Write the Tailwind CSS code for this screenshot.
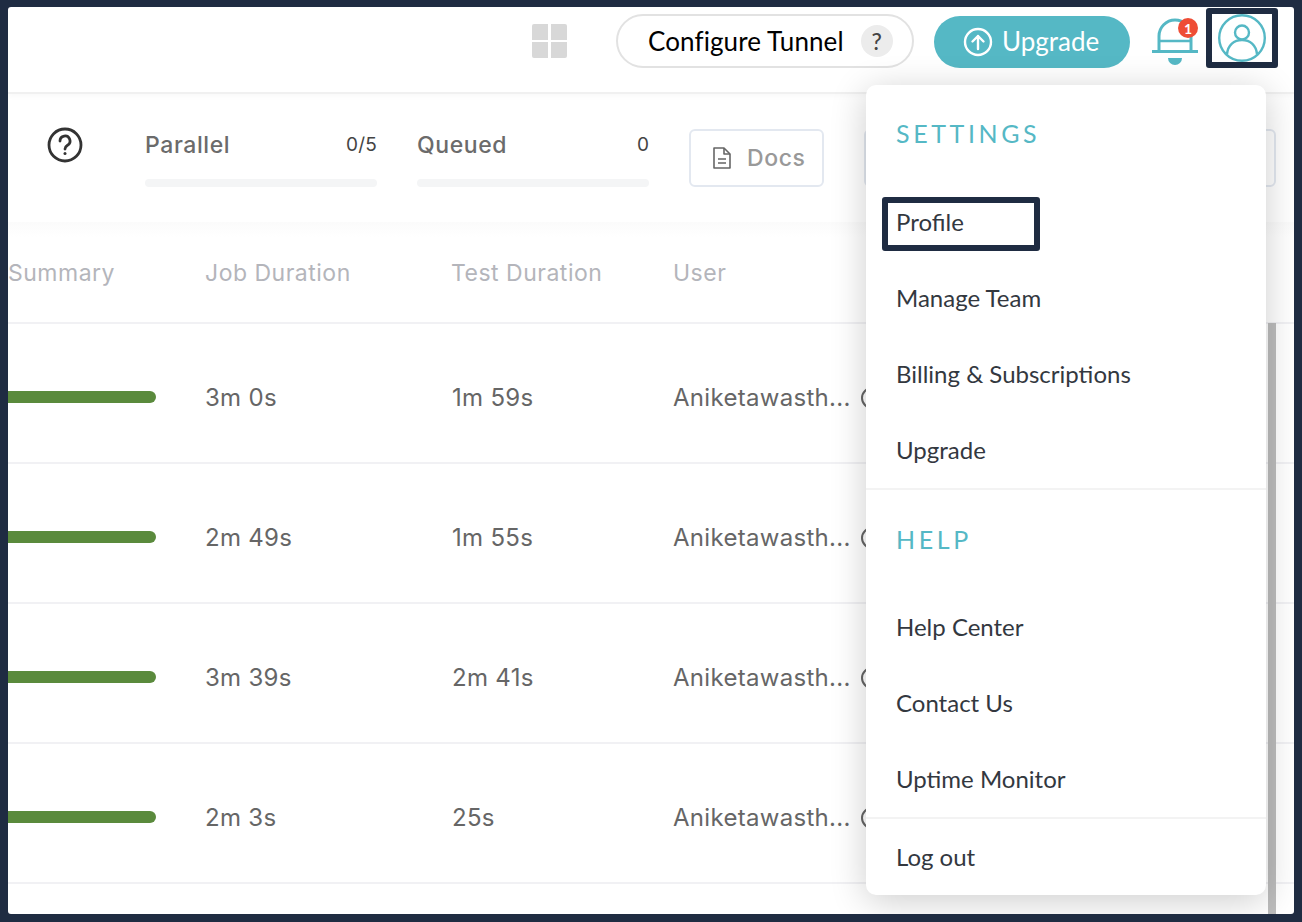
<!DOCTYPE html>
<html lang="en">
  <head>
    <meta charset="UTF-8" />
    <title>Profile menu</title>
    <script src="https://cdn.jsdelivr.net/npm/@tailwindcss/browser@4"></script>
  </head>
  <body class="bg-[#1f2c42] w-[1302px] h-[922px] overflow-hidden pt-[7px] pl-[8px] pr-[8px] pb-[8px] font-['Lato',sans-serif]">
    <div class="relative bg-white w-[1286px] h-[907px] overflow-hidden rounded-[3px]">
      <!-- top bar -->
      <header class="h-[87px] border-b-2 border-[#f0f0f0] shadow-[0_2px_6px_rgba(0,0,0,0.03)] flex items-start">
        <svg class="ml-[524px] mt-[17px] w-[35px] h-[34px]" viewBox="0 0 35 34" fill="#d8d8d8">
          <path d="M2 0h14v16H0V2a2 2 0 0 1 2-2zM19 0h14a2 2 0 0 1 2 2v14H19zM0 18h16v16H2a2 2 0 0 1-2-2zM19 18h16v14a2 2 0 0 1-2 2H19z" />
        </svg>
        <div class="ml-[49px] mt-[7px] w-[298px] h-[54px] rounded-full border-2 border-[#e2e2e2] flex items-center pl-[30px] text-[26px] tracking-[0.1px] text-black">
          <span>Configure Tunnel</span>
          <span class="ml-[17px] w-[32px] h-[32px] rounded-full bg-[#ececec] text-[#444] text-[23px] font-medium flex items-center justify-center">?</span>
        </div>
        <div class="ml-[20px] mt-[9px] w-[196px] h-[52px] rounded-full bg-[#55b8c5] text-white text-[26px] flex items-center pl-[29px]">
          <svg class="w-[30px] h-[30px] mr-[9px]" viewBox="0 0 30 30" fill="none" stroke="white" stroke-width="2.4" stroke-linecap="round" stroke-linejoin="round">
            <circle cx="15" cy="15" r="13" />
            <path d="M15 22V9M9.5 14.5 15 9l5.500 5.500" />
          </svg>
          <span class="-mt-[2px]">Upgrade</span>
        </div>
        <div class="relative ml-[22px] mt-[10px] w-[46px] h-[50px]">
          <svg class="w-[46px] h-[50px]" viewBox="0 0 46 50" fill="none" stroke="#55b8c5" stroke-width="3">
            <path d="M7 34V19a16 16 0 0 1 32 0v15" />
            <path d="M7 24h32" stroke-width="2.500" />
            <path d="M0 34.500h46" />
            <path d="M16 41h14a7 7 0 0 1-14 0z" fill="#55b8c5" stroke="none" />
          </svg>
          <span class="absolute left-[26px] top-[1px] w-[20px] h-[20px] rounded-full bg-[#ee4d36] text-white text-[14px] font-bold flex items-center justify-center">1</span>
        </div>
        <div class="ml-[8px] mt-[1px] w-[72px] h-[60px] border-[6px] border-[#1f2c42] rounded-[3px] flex items-start justify-center overflow-hidden">
          <svg class="w-[48px] h-[48px]" viewBox="0 0 48 48" fill="none" stroke="#55b8c5" stroke-width="2.400">
            <circle cx="24" cy="24" r="22.800" />
            <circle cx="24" cy="18.500" r="7" />
            <path d="M9 40c1-9 7-14 15-14s14 5 15 14" />
          </svg>
        </div>
      </header>

      <!-- stats strip -->
      <section class="h-[128px] flex items-start font-['Inter',sans-serif] text-[#6b6b6b]">
        <svg class="ml-[38px] mt-[32px] w-[38px] h-[38px]" viewBox="0 0 38 38" fill="none" stroke="#333" stroke-width="2.800">
          <circle cx="19" cy="19" r="16" />
          <path d="M14 15a5 5 0 1 1 7.500 4.300c-1.500.9-2.500 1.700-2.500 3.700" stroke-linecap="round" />
          <circle cx="19" cy="27.500" r="1.500" fill="#333" stroke="none" />
        </svg>
        <div class="ml-[61px] mt-[34px] w-[232px]">
          <div class="flex justify-between items-center h-[34px]">
            <span class="text-[23px] font-medium tracking-[0.6px]">Parallel</span>
            <span class="text-[19px] text-[#444] tracking-[0.2px]">0/5</span>
          </div>
          <div class="mt-[17px] h-[8px] rounded-full bg-[#f4f5f6]"></div>
        </div>
        <div class="ml-[40px] mt-[34px] w-[232px]">
          <div class="flex justify-between items-center h-[34px]">
            <span class="text-[23px] font-medium tracking-[0.6px]">Queued</span>
            <span class="text-[19px] text-[#444]">0</span>
          </div>
          <div class="mt-[17px] h-[8px] rounded-full bg-[#f4f5f6]"></div>
        </div>
        <div class="ml-[40px] mt-[35px] w-[135px] h-[58px] rounded-[6px] border-2 border-[#e3e8f0] flex items-center pl-[21px] text-[#999]">
          <svg class="w-[20px] h-[24px] mr-[15px]" viewBox="0 0 20 24" fill="none" stroke="#666" stroke-width="1.600" stroke-linejoin="round">
            <path d="M2 2h10l6 6v14H2z" />
            <path d="M12 2v6h6M6 13h8M6 17h8" />
          </svg>
          <span class="text-[23px] font-medium tracking-[0.6px]">Docs</span>
        </div>
        <div class="ml-[40px] mt-[35px] w-[412px] h-[58px] rounded-[6px] border-2 border-[#e3e8f0]"></div>
      </section>

      <!-- job table -->
      <section class="font-['Inter',sans-serif]">
        <div class="h-[102px] border-b-2 border-[#f1f1f4] bg-gradient-to-b from-[#fbfbfb] to-white to-[15%] flex items-center text-[23px] text-[#b4b5bb] tracking-[0.5px] pt-[3px]">
          <span class="w-[197px]">Summary</span>
          <span class="w-[246px]">Job Duration</span>
          <span class="w-[222px]">Test Duration</span>
          <span>User</span>
        </div>
        <div class="h-[140px] border-b-2 border-[#f1f1f4] flex items-center pt-[10px] text-[24px] text-[#666] tracking-[0.3px]">
          <span class="w-[197px]"><span class="block -mt-[2px] w-[148px] h-[12px] rounded-r-full bg-[#5a8a3c]"></span></span>
          <span class="w-[247px]">3m 0s</span>
          <span class="w-[221px]">1m 59s</span>
          <span class="whitespace-nowrap">Aniketawasth...</span>
          <span class="ml-[10px] w-[22px] h-[22px] rounded-full border-2 border-[#666] shrink-0"></span>
        </div>
        <div class="h-[140px] border-b-2 border-[#f1f1f4] flex items-center pt-[10px] text-[24px] text-[#666] tracking-[0.3px]">
          <span class="w-[197px]"><span class="block -mt-[2px] w-[148px] h-[12px] rounded-r-full bg-[#5a8a3c]"></span></span>
          <span class="w-[247px]">2m 49s</span>
          <span class="w-[221px]">1m 55s</span>
          <span class="whitespace-nowrap">Aniketawasth...</span>
          <span class="ml-[10px] w-[22px] h-[22px] rounded-full border-2 border-[#666] shrink-0"></span>
        </div>
        <div class="h-[140px] border-b-2 border-[#f1f1f4] flex items-center pt-[10px] text-[24px] text-[#666] tracking-[0.3px]">
          <span class="w-[197px]"><span class="block -mt-[2px] w-[148px] h-[12px] rounded-r-full bg-[#5a8a3c]"></span></span>
          <span class="w-[247px]">3m 39s</span>
          <span class="w-[221px]">2m 41s</span>
          <span class="whitespace-nowrap">Aniketawasth...</span>
          <span class="ml-[10px] w-[22px] h-[22px] rounded-full border-2 border-[#666] shrink-0"></span>
        </div>
        <div class="h-[140px] border-b-2 border-[#f1f1f4] flex items-center pt-[10px] text-[24px] text-[#666] tracking-[0.3px]">
          <span class="w-[197px]"><span class="block -mt-[2px] w-[148px] h-[12px] rounded-r-full bg-[#5a8a3c]"></span></span>
          <span class="w-[247px]">2m 3s</span>
          <span class="w-[221px]">25s</span>
          <span class="whitespace-nowrap">Aniketawasth...</span>
          <span class="ml-[10px] w-[22px] h-[22px] rounded-full border-2 border-[#666] shrink-0"></span>
        </div>
      </section>

      <!-- scrollbar track and thumb -->
      <div class="absolute left-[1260px] top-[316px] w-[8px] h-[591px] bg-[#bdbdbd]"></div>

      <!-- account menu -->
      <nav class="absolute left-[858px] top-[78px] w-[400px] h-[810px] bg-white rounded-[10px] shadow-[0_6px_36px_rgba(0,0,0,0.2)] text-[24px] text-[#33383f]">
        <div class="pl-[30px] pt-[30px] h-[112px] text-[25px] tracking-[3.6px] text-[#55b8c5]">SETTINGS</div>
        <div class="ml-[16px] w-[158px] h-[54px] border-[6px] border-[#1f2c42] rounded-[3px] pl-[8px] pb-[4px] flex items-center">Profile</div>
        <div class="pl-[30px] h-[76px] mt-[9px] flex items-center">Manage Team</div>
        <div class="pl-[30px] h-[76px] flex items-center">Billing &amp; Subscriptions</div>
        <div class="pl-[30px] h-[76px] flex items-center">Upgrade</div>
        <div class="border-t-2 border-[#f3f3f3] pl-[30px] pt-[31px] h-[101px] text-[25px] tracking-[3.6px] text-[#55b8c5]">HELP</div>
        <div class="pl-[30px] h-[76px] flex items-center">Help Center</div>
        <div class="pl-[30px] h-[76px] flex items-center">Contact Us</div>
        <div class="pl-[30px] h-[76px] flex items-center">Uptime Monitor</div>
        <div class="border-t-2 border-[#f3f3f3] pl-[30px] pt-[2px] h-[76px] flex items-center">Log out</div>
      </nav>
    </div>
  </body>
</html>
